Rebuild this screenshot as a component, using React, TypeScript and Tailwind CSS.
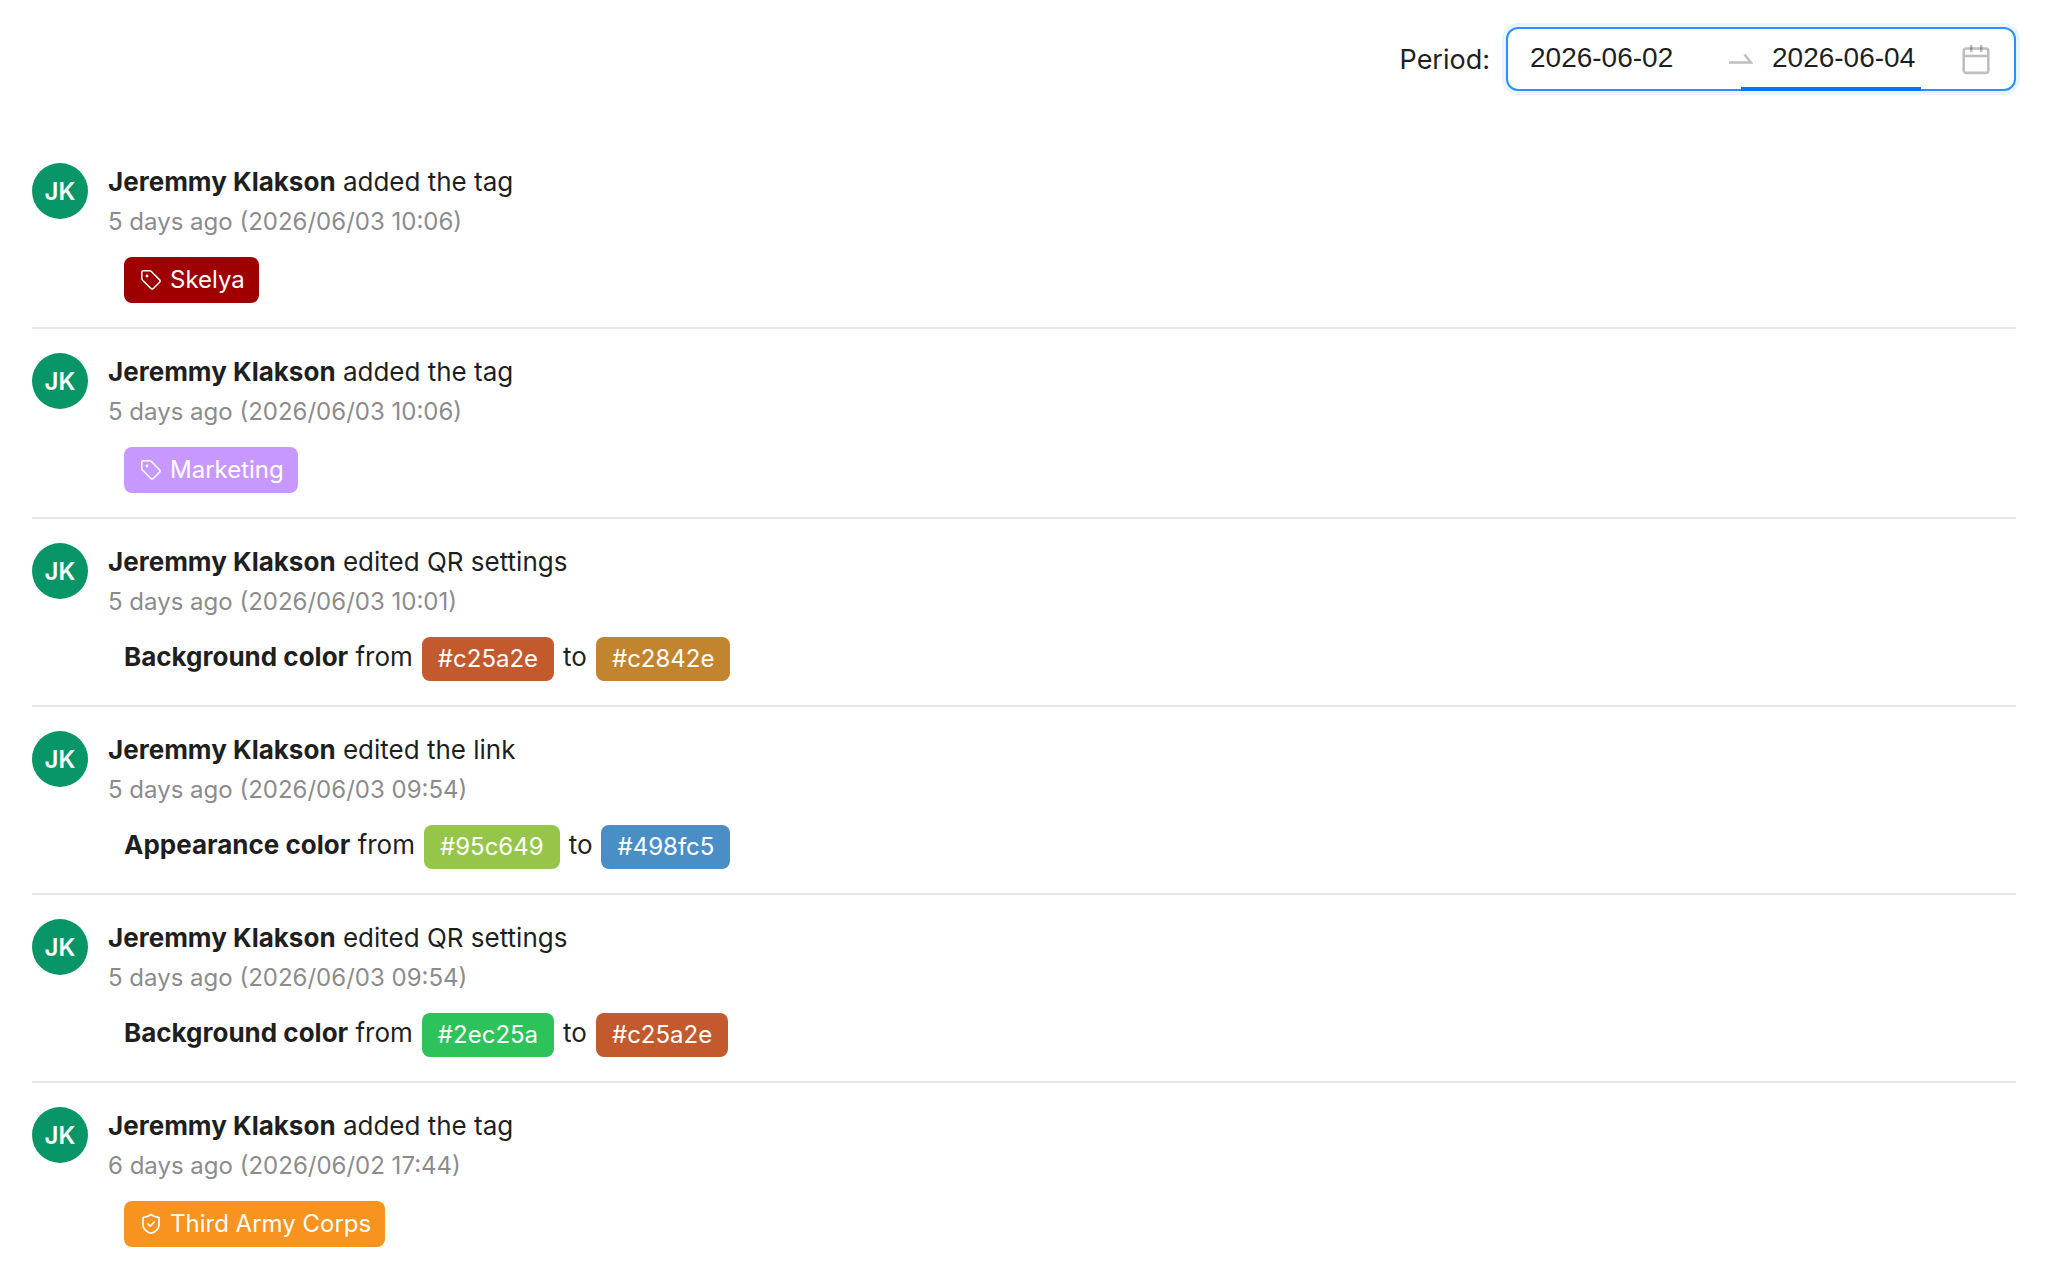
import { useState } from 'react'

type Swatch = { value: string; className: string }

type Activity = {
  id: number
  action: string
  when: string
  date: string
  tag?: { label: string; icon: 'tag' | 'shield'; className: string }
  change?: { field: string; from: Swatch; to: Swatch }
}

const user = { name: 'Jeremmy Klakson', initials: 'JK' }

const activities: Activity[] = [
  {
    id: 1,
    action: 'added the tag',
    when: '5 days ago',
    date: '2026/06/03 10:06',
    tag: { label: 'Skelya', icon: 'tag', className: 'bg-[#9e0000]' },
  },
  {
    id: 2,
    action: 'added the tag',
    when: '5 days ago',
    date: '2026/06/03 10:06',
    tag: { label: 'Marketing', icon: 'tag', className: 'bg-[#c798ff]' },
  },
  {
    id: 3,
    action: 'edited QR settings',
    when: '5 days ago',
    date: '2026/06/03 10:01',
    change: {
      field: 'Background color',
      from: { value: '#c25a2e', className: 'bg-[#c25a2e]' },
      to: { value: '#c2842e', className: 'bg-[#c2842e]' },
    },
  },
  {
    id: 4,
    action: 'edited the link',
    when: '5 days ago',
    date: '2026/06/03 09:54',
    change: {
      field: 'Appearance color',
      from: { value: '#95c649', className: 'bg-[#95c649]' },
      to: { value: '#498fc5', className: 'bg-[#498fc5]' },
    },
  },
  {
    id: 5,
    action: 'edited QR settings',
    when: '5 days ago',
    date: '2026/06/03 09:54',
    change: {
      field: 'Background color',
      from: { value: '#2ec25a', className: 'bg-[#2ec25a]' },
      to: { value: '#c25a2e', className: 'bg-[#c25a2e]' },
    },
  },
  {
    id: 6,
    action: 'added the tag',
    when: '6 days ago',
    date: '2026/06/02 17:44',
    tag: { label: 'Third Army Corps', icon: 'shield', className: 'bg-[#f7931e]' },
  },
]

function TagIcon() {
  return (
    <svg viewBox="0 0 22 22" className="size-[22px]" fill="none" stroke="currentColor" strokeWidth="1.5" strokeLinejoin="round" aria-hidden="true">
      <path d="M1.8 3.2v6.4c0 .5.2 1 .6 1.4l8.3 8.3c.8.8 2.1.8 2.9 0l5.8-5.8c.8-.8.8-2.1 0-2.9L11.1 2.3c-.4-.4-.9-.6-1.4-.6H3.3c-.8 0-1.5.7-1.5 1.5z" />
      <circle cx="7" cy="7" r="1.4" fill="currentColor" stroke="none" />
    </svg>
  )
}

function ShieldIcon() {
  return (
    <svg viewBox="0 0 22 22" className="size-[22px]" fill="none" stroke="currentColor" strokeWidth="1.7" strokeLinecap="round" strokeLinejoin="round" aria-hidden="true">
      <path d="M11 1.5c2 1.6 4.6 2.8 8 3v7.5c0 4-3 6.7-8 8.3-5-1.6-8-4.3-8-8.3V4.5c3.4-.2 6-1.4 8-3z" />
      <path d="M8 11l2.2 2.2 4-4.2" />
    </svg>
  )
}

function ArrowIcon() {
  return (
    <svg viewBox="0 0 24 12" className="h-3 w-6 text-[#bfbfbf]" fill="none" stroke="currentColor" strokeWidth="2.6" aria-hidden="true">
      <path d="M0 9.5h22L15.5 1.5" />
    </svg>
  )
}

function CalendarIcon() {
  return (
    <svg viewBox="0 0 28 32" className="h-8 w-7 text-black/25" fill="none" stroke="currentColor" strokeWidth="2.6" aria-hidden="true">
      <rect x="1.7" y="5.5" width="24.6" height="24.4" rx="2.4" />
      <path d="M3 13h22" />
      <path d="M9.2 2v7" />
      <path d="M19.2 2v7" />
    </svg>
  )
}

function ActivityRow({ item }: { item: Activity }) {
  return (
    <li className="flex gap-5 border-b-2 border-[#e5e7eb] py-6 last:border-b-0">
      <div className="flex size-14 shrink-0 items-center justify-center rounded-full bg-[#089668] pt-0.5 text-2xl font-semibold text-white">
        {user.initials}
      </div>
      <div className="min-w-0">
        <p className="text-[26px] leading-[38px]">
          <strong className="font-bold">{user.name}</strong> {item.action}
        </p>
        <p className="text-2xl leading-[42px] text-[#8c8c8c]">
          {item.when} ({item.date})
        </p>
        <div className="mt-[14px] ml-4">
          {item.tag && (
            <span className={`flex h-[46px] w-fit items-center gap-2 rounded-lg pr-[14px] pl-4 text-2xl text-white ${item.tag.className}`}>
              {item.tag.icon === 'tag' ? <TagIcon /> : <ShieldIcon />}
              {item.tag.label}
            </span>
          )}
          {item.change && (
            <p className="flex items-start gap-[9px] text-[26px] leading-10">
              <span>
                <strong className="font-bold">{item.change.field}</strong> from
              </span>
              <span className={`rounded-lg px-4 text-2xl leading-11 text-white ${item.change.from.className}`}>
                {item.change.from.value}
              </span>
              <span>to</span>
              <span className={`rounded-lg px-4 text-2xl leading-11 text-white ${item.change.to.className}`}>
                {item.change.to.value}
              </span>
            </p>
          )}
        </div>
      </div>
    </li>
  )
}

export default function App() {
  const [start, setStart] = useState('2026-06-02')
  const [end, setEnd] = useState('2026-06-04')

  return (
    <main className="bg-white pt-[27px] pr-[31px] pl-8 font-[Inter,sans-serif] text-[#1f1f1f]">
      {/* Period filter */}
      <div className="flex items-center justify-end gap-4">
        <label htmlFor="period-start" className="pt-0.5 text-[27px]">
          Period:
        </label>
        <div className="flex h-16 items-center rounded-xl border-2 border-[#2b8fff] pr-6 pl-[22px] ring-4 ring-[#e9f4ff]">
          <input
            id="period-start"
            value={start}
            onChange={(e) => setStart(e.target.value)}
            className="w-[180px] pb-0.5 font-['Liberation_Sans',Arial,sans-serif] text-[28px] outline-none"
          />
          <span className="flex w-[62px] justify-center">
            <ArrowIcon />
          </span>
          <div className="relative flex h-full items-center">
            <input
              aria-label="Period end"
              value={end}
              onChange={(e) => setEnd(e.target.value)}
              className="w-[180px] pb-0.5 font-['Liberation_Sans',Arial,sans-serif] text-[28px] outline-none"
            />
            {/* Active side marker, sits on the field border */}
            <span className="absolute -bottom-0.5 -left-[31px] h-1 w-[180px] bg-[#0573ff]" />
          </div>
          <button type="button" aria-label="Open calendar" className="ml-2.5">
            <CalendarIcon />
          </button>
        </div>
      </div>

      <ul className="mt-12">
        {activities.map((item) => (
          <ActivityRow key={item.id} item={item} />
        ))}
      </ul>
    </main>
  )
}
